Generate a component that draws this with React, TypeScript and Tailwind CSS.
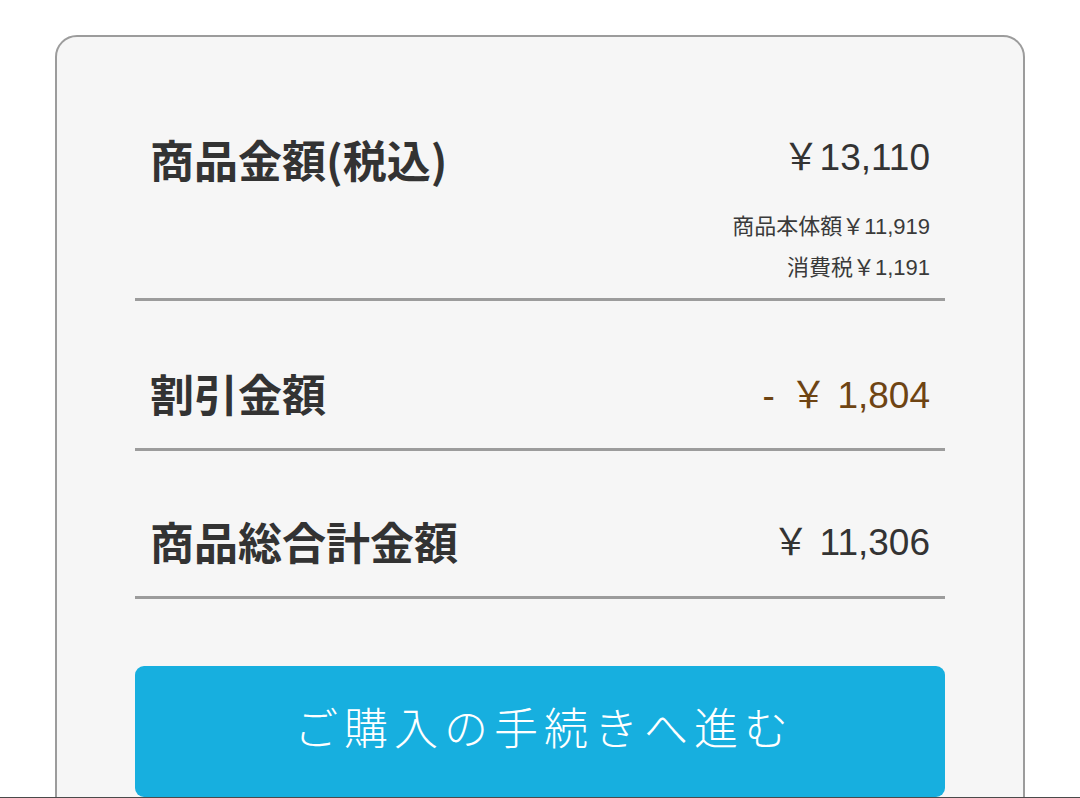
import React from 'react';

const jp = "font-['Noto_Sans_CJK_JP','Noto_Sans',sans-serif]";
const num = "font-['Liberation_Sans','Noto_Sans_CJK_JP',sans-serif]";

const Divider: React.FC = () => <div className="h-[3px] bg-[#9c9c9c]" />;

export default function App() {
  return (
    <div className="w-[1080px] h-[798px] overflow-hidden bg-white border-b border-[#4a4a4a] pt-[35px] pl-[55px] pr-[55px]">
      {/* Cart summary card */}
      <div className="h-[900px] rounded-t-[22px] border-2 border-[#9c9c9c] bg-[#f6f6f6] px-[78px] pt-[92px]">
        <div className="flex items-start justify-between px-[15px] pb-[11px]">
          <h2 className={`${jp} text-[44px] leading-[60px] font-bold text-[#333]`}>商品金額(税込)</h2>
          <div className="flex flex-col items-end text-[#333]">
            <span className={`${num} translate-y-[1px] text-[37px] leading-[56px]`}>￥13,110</span>
            <div className={`${jp} mt-[20px] flex flex-col items-end text-[22px] leading-[39px] text-[#3a3a3a]`}>
              <span>商品本体額<span className={num}>￥11,919</span></span>
              <span>消費税<span className={num}>￥1,191</span></span>
            </div>
          </div>
        </div>
        <Divider />

        <div className="flex items-center justify-between px-[15px] pt-[62px] pb-[25px]">
          <h2 className={`${jp} text-[44px] leading-[60px] font-bold text-[#333]`}>割引金額</h2>
          <span className={`${num} translate-y-[3px] text-[37px] leading-[60px] text-[#6e4413] whitespace-pre`}>
            <span className="mr-[5px]">-</span> ￥ 1,804
          </span>
        </div>
        <Divider />

        <div className="flex items-center justify-between px-[15px] pt-[60px] pb-[25px]">
          <h2 className={`${jp} text-[44px] leading-[60px] font-bold text-[#333]`}>商品総合計金額</h2>
          <span className={`${num} translate-y-[2px] text-[37px] leading-[60px] text-[#333] whitespace-pre`}>￥ 11,306</span>
        </div>
        <Divider />

        <button className={`${jp} mt-[67px] flex h-[131px] w-full items-center justify-center rounded-[9px] bg-[#17afdf] pb-[12px] pl-[8px] text-[44px] font-light tracking-[6px] text-white`}>
          ご購入の手続きへ進む
        </button>
      </div>
    </div>
  );
}
